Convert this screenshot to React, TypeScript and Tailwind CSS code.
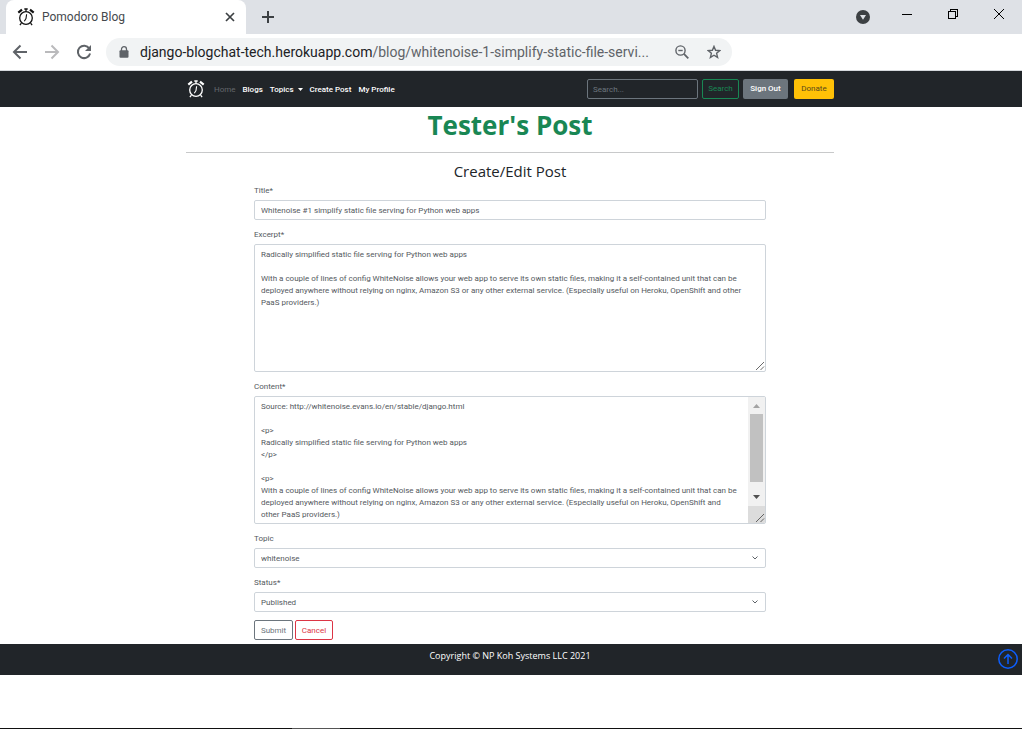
import type { ReactNode, SVGProps } from "react";

const excerpt = `Radically simplified static file serving for Python web apps

With a couple of lines of config WhiteNoise allows your web app to serve its own static files, making it a self-contained unit that can be deployed anywhere without relying on nginx, Amazon S3 or any other external service. (Especially useful on Heroku, OpenShift and other PaaS providers.)`;

const content = `Source: http://whitenoise.evans.io/en/stable/django.html

<p>
Radically simplified static file serving for Python web apps
</p>

<p>
With a couple of lines of config WhiteNoise allows your web app to serve its own static files, making it a self-contained unit that can be deployed anywhere without relying on nginx, Amazon S3 or any other external service. (Especially useful on Heroku, OpenShift and other PaaS providers.)
</p>`;

const fieldText = "text-[8px] text-[#54595e]";
const fieldBox = "w-full rounded-[2px] border border-[#ced4da] bg-white px-[6px]";

function AlarmClock(props: SVGProps<SVGSVGElement>) {
  return (
    <svg width="18" height="18" viewBox="0 0 18 18" fill="none" stroke="currentColor" aria-hidden="true" {...props}>
      <circle cx="9" cy="10" r="6.3" strokeWidth="1.3" />
      <path d="M1.3 4.6 5 1.6M13 1.6l3.7 3" strokeWidth="2.2" />
      <path d="M7.3 1h3.4M9 1v2.6M4.4 15.2l-1.5 2M13.6 15.2l1.5 2" strokeWidth="1.3" />
      <path d="M9.6 6.2 9 10.6l-1.7 2.6" strokeWidth="1.1" />
    </svg>
  );
}

function ResizeGrip() {
  return (
    <svg width="10" height="10" viewBox="0 0 10 10" stroke="#444" strokeWidth=".8" aria-hidden="true">
      <path d="M1 9 9 1M5.500 9 9 5.500" fill="none" />
    </svg>
  );
}

function BrowserChrome() {
  return (
    <header>
      <div className="flex h-[34px] items-stretch bg-[#dee1e6] pl-[6px]">
        <div className="flex w-[240px] items-center rounded-t-lg bg-white pr-[10px] pl-[11px]">
          <AlarmClock className="text-[#111]" />
          <span className="ml-[7px] flex-1 text-[12px] text-[#45494d]">Pomodoro Blog</span>
          <button aria-label="Close tab" className="text-[#3c4043]">
            <svg width="12" height="12" viewBox="0 0 12 12" stroke="currentColor" strokeWidth="1.7">
              <path d="m2 2 8 8M10 2l-8 8" />
            </svg>
          </button>
        </div>
        <button aria-label="New tab" className="ml-[15px] text-[#3c4043]">
          <svg width="14" height="14" viewBox="0 0 14 14" stroke="currentColor" strokeWidth="2">
            <path d="M7 1v12M1 7h12" />
          </svg>
        </button>
        <div className="ml-auto flex items-start text-black">
          <button aria-label="Search tabs" className="mt-[10px] mr-[31px]">
            <svg width="14" height="14" viewBox="0 0 14 14">
              <circle cx="7" cy="7" r="7" fill="#3c4043" />
              <path d="M4 5h6L7 9.800z" fill="#dee1e6" />
            </svg>
          </button>
          <button aria-label="Minimize" className="mt-[8px] mr-[34px]">
            <svg width="12" height="12" viewBox="0 0 12 12" stroke="currentColor" shapeRendering="crispEdges">
              <path d="M1 6.500h10" />
            </svg>
          </button>
          <button aria-label="Restore" className="mt-[8px] mr-[34px]">
            <svg width="12" height="12" viewBox="0 0 12 12" fill="none" stroke="currentColor" shapeRendering="crispEdges">
              <path d="M1.500 3.500h7v7h-7zM3.500 3V1.500h7v7H9" />
            </svg>
          </button>
          <button aria-label="Close window" className="mt-[8px] mr-[17px]">
            <svg width="12" height="12" viewBox="0 0 12 12" stroke="currentColor">
              <path d="m1 1 10 10M11 1 1 11" />
            </svg>
          </button>
        </div>
      </div>
      <div className="flex h-[37px] items-center border-b border-[#d5d8dc] bg-white pl-[12px]">
        <button aria-label="Back" className="text-[#5f6368]">
          <svg width="16" height="16" viewBox="0 0 16 16" fill="none" stroke="currentColor" strokeWidth="2">
            <path d="M15 8H2.500M8.500 1.500 2 8l6.500 6.500" />
          </svg>
        </button>
        <button aria-label="Forward" className="ml-[16px] text-[#bababc]">
          <svg width="16" height="16" viewBox="0 0 16 16" fill="none" stroke="currentColor" strokeWidth="2">
            <path d="M1 8h12.500M7.500 1.500 14 8l-6.500 6.500" />
          </svg>
        </button>
        <button aria-label="Reload" className="ml-[16px] text-[#5f6368]">
          <svg width="16" height="16" viewBox="0 0 16 16" fill="none">
            <path d="M13.300 4.500A6.200 6.200 0 1 0 14.100 9.500" stroke="currentColor" strokeWidth="2" />
            <path d="M15 1v6H9z" fill="currentColor" />
          </svg>
        </button>
        <div className="ml-[14px] flex h-[28px] w-[626px] items-center rounded-full bg-[#f1f3f4] pr-[11px] pl-[13px]">
          <svg width="10" height="12" viewBox="0 0 10 12" aria-hidden="true">
            <path d="M2.500 5V3.200a2.500 2.500 0 0 1 5 0V5" fill="none" stroke="#5f6368" strokeWidth="1.300" />
            <rect x=".5" y="4.300" width="9" height="7.500" rx="1" fill="#5f6368" />
          </svg>
          <a href="#page" className="ml-[11px] flex-1 text-[14px] whitespace-nowrap text-[#5f6368]">
            <span className="text-[#202124]">django-blogchat-tech.herokuapp.com</span>
            /blog/whitenoise-1-simplify-static-file-servi...
          </a>
          <button aria-label="Zoom" className="text-[#5f6368]">
            <svg width="14" height="14" viewBox="0 0 14 14" fill="none" stroke="currentColor" strokeWidth="1.400">
              <circle cx="5.500" cy="5.500" r="4.600" />
              <path d="M3.300 5.500h4.400" />
              <path d="m8.900 8.900 4.400 4.400" strokeWidth="1.800" />
            </svg>
          </button>
          <button aria-label="Bookmark" className="ml-[18px] text-[#5f6368]">
            <svg width="14" height="14" viewBox="0 0 14 14" fill="none" stroke="currentColor" strokeWidth="1.400">
              <path d="m7 1.400 1.600 3.900 4.200.3-3.200 2.700 1 4.100L7 10.200l-3.600 2.200 1-4.100L1.200 5.600l4.200-.3z" />
            </svg>
          </button>
        </div>
      </div>
    </header>
  );
}

function SiteNav() {
  const link = "text-[8px] font-medium text-white";
  return (
    <nav className="bg-[#212529] pr-[2px]">
      <div className="mx-auto flex h-[36px] max-w-[648px] items-center">
        <a href="#home" aria-label="Pomodoro Blog" className="ml-px text-white">
          <AlarmClock />
        </a>
        <div className="ml-[9px] flex items-center gap-[7px] pt-px">
          <a href="#home" className="text-[8px] text-[#64686c]">Home</a>
          <a href="#blogs" className={link}>Blogs</a>
          <button className="flex items-center gap-[4px] text-[8px] font-medium text-white">
            Topics
            <svg width="5" height="3" viewBox="0 0 5 3" fill="currentColor" aria-hidden="true">
              <path d="M0 0h5L2.500 3z" />
            </svg>
          </button>
          <a href="#create" className={link}>Create Post</a>
          <a href="#profile" className={link}>My Profile</a>
        </div>
        <form className="ml-auto flex gap-[4px] text-[8px]" onSubmit={(e) => e.preventDefault()}>
          <input
            type="search"
            aria-label="Search"
            placeholder="Search..."
            className="h-[20px] w-[111px] rounded-[2px] border border-[#6c757d] bg-[#212529] px-[5px] text-white placeholder:text-[#6c757d]"
          />
          <button className="h-[20px] w-[37px] rounded-[2px] border border-[#198754] text-[#198754]">Search</button>
          <button type="button" className="h-[20px] w-[45px] rounded-[2px] bg-[#6c757d] font-medium text-white">Sign Out</button>
        </form>
        <button className="ml-[6px] h-[20px] w-[40px] rounded-[2px] bg-[#ffc107] text-[8px] text-[#5a4a1a]">Donate</button>
      </div>
    </nav>
  );
}

function Field({ id, label, children }: { id: string; label: string; children: ReactNode }) {
  return (
    <div className="mb-[8px] flex flex-col gap-[2px]">
      <label htmlFor={id} className={`${fieldText} leading-[14px]`}>{label}</label>
      {children}
    </div>
  );
}

function SelectBox({ id, value }: { id: string; value: string }) {
  return (
    <div className="relative flex">
      <select id={id} defaultValue={value} className={`${fieldBox} ${fieldText} h-[20px] appearance-none pt-px`}>
        <option>{value}</option>
      </select>
      <svg className="pointer-events-none absolute top-[7px] right-[7px]" width="8" height="6" viewBox="0 0 8 6" fill="none" stroke="#343a40" strokeWidth=".8" aria-hidden="true">
        <path d="m1.500 1.500 2.500 2.500 2.500-2.500" />
      </svg>
    </div>
  );
}

export default function App() {
  return (
    <div className="flex min-h-screen flex-col bg-white font-['Roboto','Noto_Sans',sans-serif]">
      <BrowserChrome />
      <SiteNav />
      <main id="page" className="pr-[2px]">
        <div className="mx-auto max-w-[648px]">
          <h1 className="h-[46px] border-b border-[#c8c9ca] text-center font-['Open_Sans','Noto_Sans',sans-serif] text-[26px] leading-[36px] font-bold text-[#198754]">Tester's Post</h1>
          <form className="mx-auto max-w-[512px] pt-[8px]" onSubmit={(e) => e.preventDefault()}>
            <h2 className="mb-[2px] text-center font-['Open_Sans','Noto_Sans',sans-serif] text-[15px] leading-[21px] font-medium text-[#212529]">Create/Edit Post</h2>
            <Field id="title" label="Title*">
              <input id="title" defaultValue="Whitenoise #1 simplify static file serving for Python web apps" className={`${fieldBox} ${fieldText} h-[20px]`} />
            </Field>
            <Field id="excerpt" label="Excerpt*">
              <div className="relative flex">
                <textarea id="excerpt" defaultValue={excerpt} className={`${fieldBox} ${fieldText} h-[128px] resize-none py-[4px] leading-[12px]`} />
                <span className="pointer-events-none absolute right-px bottom-px"><ResizeGrip /></span>
              </div>
            </Field>
            <Field id="content" label="Content*">
              <div className="flex h-[128px] overflow-hidden rounded-[2px] border border-[#ced4da]">
                <textarea id="content" defaultValue={content} className={`${fieldText} flex-1 resize-none py-[4px] pr-[9px] pl-[6px] leading-[12px] outline-none [scrollbar-width:none]`} />
                <div className="flex w-[17px] flex-col items-center bg-[#f1f1f1]" aria-hidden="true">
                  <svg width="17" height="17" viewBox="0 0 17 17"><path d="M5 11h7L8.500 7z" fill="#a3a3a3" /></svg>
                  <div className="h-[68px] w-[13px] bg-[#c1c1c1]" />
                  <svg className="mt-auto" width="17" height="17" viewBox="0 0 17 17"><path d="M5 6h7L8.500 10z" fill="#505050" /></svg>
                  <div className="flex h-[17px] w-full items-end justify-end bg-[#dcdcdc]"><ResizeGrip /></div>
                </div>
              </div>
            </Field>
            <Field id="topic" label="Topic"><SelectBox id="topic" value="whitenoise" /></Field>
            <Field id="status" label="Status*"><SelectBox id="status" value="Published" /></Field>
            <div className="mb-[4px] flex gap-[2px] text-[8px]">
              <button className="h-[20px] w-[39px] rounded-[2px] border border-[#6c757d] pt-px text-[#6c757d]">Submit</button>
              <button type="button" className="h-[20px] w-[38px] rounded-[2px] border border-[#dc3545] pt-px text-[#dc3545]">Cancel</button>
            </div>
          </form>
        </div>
      </main>
      <footer className="relative h-[31px] bg-[#212529] pt-[5px] pr-[2px] text-center font-['Open_Sans','Noto_Sans',sans-serif] text-[9px] leading-[14px] text-white">
        Copyright © NP Koh Systems LLC 2021
        <a href="#page" aria-label="Back to top" className="absolute top-[5px] right-[4px]">
          <svg width="20" height="20" viewBox="0 0 20 20" fill="none" stroke="#0d5efd" strokeWidth="1.500">
            <circle cx="10" cy="10" r="9.200" />
            <path d="M10 15V5.500M6 9.500l4-4 4 4" />
          </svg>
        </a>
      </footer>
      <div className="mt-auto flex h-px bg-[#111] pl-[292px]"><div className="w-[48px] bg-[#555]" /></div>
    </div>
  );
}
